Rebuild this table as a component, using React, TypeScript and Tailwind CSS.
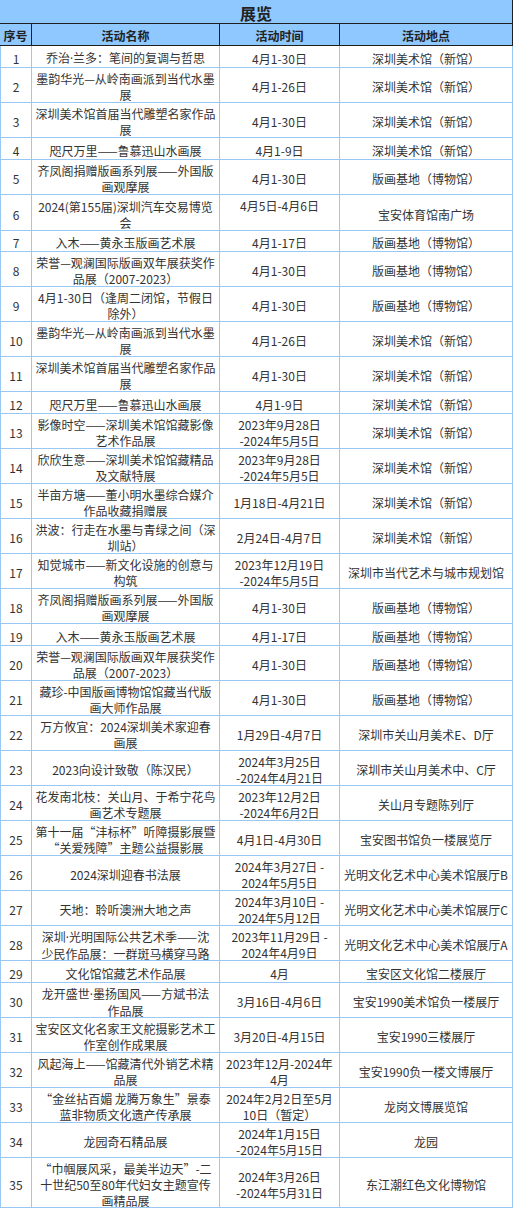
import React from "react";

type Row = {
  no: number;
  name: string[];
  time: string[];
  loc: string;
  h: string;
  timeTop?: boolean;
};

const rows: Row[] = [
  { no: 1, name: ["乔治·兰多：笔间的复调与哲思"], time: ["4月1-30日"], loc: "深圳美术馆（新馆）", h: "h-[22px]" },
  { no: 2, name: ["墨韵华光—从岭南画派到当代水墨", "展"], time: ["4月1-26日"], loc: "深圳美术馆（新馆）", h: "h-[35px]" },
  { no: 3, name: ["深圳美术馆首届当代雕塑名家作品", "展"], time: ["4月1-30日"], loc: "深圳美术馆（新馆）", h: "h-[35px]" },
  { no: 4, name: ["咫尺万里——鲁慕迅山水画展"], time: ["4月1-9日"], loc: "深圳美术馆（新馆）", h: "h-[22px]" },
  { no: 5, name: ["齐凤阁捐赠版画系列展——外国版", "画观摩展"], time: ["4月1-30日"], loc: "版画基地（博物馆）", h: "h-[35px]" },
  { no: 6, name: ["2024(第155届)深圳汽车交易博览", "会"], time: ["4月5日-4月6日"], loc: "宝安体育馆南广场", h: "h-[36px]", timeTop: true },
  { no: 7, name: ["入木——黄永玉版画艺术展"], time: ["4月1-17日"], loc: "版画基地（博物馆）", h: "h-[21px]" },
  { no: 8, name: ["荣誉—观澜国际版画双年展获奖作", "品展（2007-2023）"], time: ["4月1-30日"], loc: "版画基地（博物馆）", h: "h-[35px]" },
  { no: 9, name: ["4月1-30日（逢周二闭馆，节假日", "除外）"], time: ["4月1-30日"], loc: "版画基地（博物馆）", h: "h-[35px]" },
  { no: 10, name: ["墨韵华光—从岭南画派到当代水墨", "展"], time: ["4月1-26日"], loc: "深圳美术馆（新馆）", h: "h-[35px]" },
  { no: 11, name: ["深圳美术馆首届当代雕塑名家作品", "展"], time: ["4月1-30日"], loc: "深圳美术馆（新馆）", h: "h-[35px]" },
  { no: 12, name: ["咫尺万里——鲁慕迅山水画展"], time: ["4月1-9日"], loc: "深圳美术馆（新馆）", h: "h-[22px]" },
  { no: 13, name: ["影像时空——深圳美术馆馆藏影像", "艺术作品展"], time: ["2023年9月28日", "-2024年5月5日"], loc: "深圳美术馆（新馆）", h: "h-[35px]" },
  { no: 14, name: ["欣欣生意——深圳美术馆馆藏精品", "及文献特展"], time: ["2023年9月28日", "-2024年5月5日"], loc: "深圳美术馆（新馆）", h: "h-[35px]" },
  { no: 15, name: ["半亩方塘——董小明水墨综合媒介", "作品收藏捐赠展"], time: ["1月18日-4月21日"], loc: "深圳美术馆（新馆）", h: "h-[35px]" },
  { no: 16, name: ["洪波：行走在水墨与青绿之间（深", "圳站）"], time: ["2月24日-4月7日"], loc: "深圳美术馆（新馆）", h: "h-[35px]" },
  { no: 17, name: ["知觉城市——新文化设施的创意与", "构筑"], time: ["2023年12月19日", "-2024年5月5日"], loc: "深圳市当代艺术与城市规划馆", h: "h-[35px]" },
  { no: 18, name: ["齐凤阁捐赠版画系列展——外国版", "画观摩展"], time: ["4月1-30日"], loc: "版画基地（博物馆）", h: "h-[35px]" },
  { no: 19, name: ["入木——黄永玉版画艺术展"], time: ["4月1-17日"], loc: "版画基地（博物馆）", h: "h-[22px]" },
  { no: 20, name: ["荣誉—观澜国际版画双年展获奖作", "品展（2007-2023）"], time: ["4月1-30日"], loc: "版画基地（博物馆）", h: "h-[35px]" },
  { no: 21, name: ["藏珍-中国版画博物馆馆藏当代版", "画大师作品展"], time: ["4月1-30日"], loc: "版画基地（博物馆）", h: "h-[35px]" },
  { no: 22, name: ["万方攸宜：2024深圳美术家迎春", "画展"], time: ["1月29日-4月7日"], loc: "深圳市关山月美术E、D厅", h: "h-[35px]" },
  { no: 23, name: ["2023向设计致敬（陈汉民）"], time: ["2024年3月25日", "-2024年4月21日"], loc: "深圳市关山月美术中、C厅", h: "h-[35px]" },
  { no: 24, name: ["花发南北枝：关山月、于希宁花鸟", "画艺术专题展"], time: ["2023年12月2日", "-2024年6月2日"], loc: "关山月专题陈列厅", h: "h-[35px]" },
  { no: 25, name: ["第十一届“沣标杯”听障摄影展暨", "“关爱残障”主题公益摄影展"], time: ["4月1日-4月30日"], loc: "宝安图书馆负一楼展览厅", h: "h-[35px]" },
  { no: 26, name: ["2024深圳迎春书法展"], time: ["2024年3月27日 -", "2024年5月5日"], loc: "光明文化艺术中心美术馆展厅B", h: "h-[35px]" },
  { no: 27, name: ["天地：聆听澳洲大地之声"], time: ["2024年3月10日 -", "2024年5月12日"], loc: "光明文化艺术中心美术馆展厅C", h: "h-[35px]" },
  { no: 28, name: ["深圳·光明国际公共艺术季——沈", "少民作品展：一群斑马横穿马路"], time: ["2023年11月29日 -", "2024年4月9日"], loc: "光明文化艺术中心美术馆展厅A", h: "h-[35px]" },
  { no: 29, name: ["文化馆馆藏艺术作品展"], time: ["4月"], loc: "宝安区文化馆二楼展厅", h: "h-[22px]" },
  { no: 30, name: ["龙开盛世·墨扬国风——方斌书法", "作品展"], time: ["3月16日-4月6日"], loc: "宝安1990美术馆负一楼展厅", h: "h-[35px]" },
  { no: 31, name: ["宝安区文化名家王文舵摄影艺术工", "作室创作成果展"], time: ["3月20日-4月15日"], loc: "宝安1990三楼展厅", h: "h-[35px]" },
  { no: 32, name: ["风起海上——馆藏清代外销艺术精", "品展"], time: ["2023年12月-2024年", "4月"], loc: "宝安1990负一楼文博展厅", h: "h-[35px]" },
  { no: 33, name: ["“金丝拈百媚 龙腾万象生”景泰", "蓝非物质文化遗产传承展"], time: ["2024年2月2日至5月", "10日（暂定）"], loc: "龙岗文博展览馆", h: "h-[35px]" },
  { no: 34, name: ["龙园奇石精品展"], time: ["2024年1月15日", "-2024年5月15日"], loc: "龙园", h: "h-[35px]" },
  { no: 35, name: ["“巾帼展风采，最美半边天”-二", "十世纪50至80年代妇女主题宣传", "画精品展"], time: ["2024年3月26日", "-2024年5月31日"], loc: "东江潮红色文化博物馆", h: "h-[50px]" },
];

function Line({ text }: { text: string }) {
  const parts = text.split("·");
  return (
    <div className="whitespace-nowrap leading-[16px]">
      {parts.map((p, i) => (
        <React.Fragment key={i}>
          {i > 0 && <span className="font-['Open_Sans',sans-serif]">·</span>}
          {p}
        </React.Fragment>
      ))}
    </div>
  );
}

function Lines({ lines }: { lines: string[] }) {
  return (
    <>
      {lines.map((l, i) => (
        <Line key={i} text={l} />
      ))}
    </>
  );
}

const cell =
  "flex flex-col items-center justify-center pt-[4px] border-r border-b border-[#99c8f2] text-center overflow-hidden";

export default function App() {
  return (
    <div className="w-[513px] bg-white font-['Noto_Sans_CJK_SC',sans-serif] text-[12px] text-[#333333]">
      <div className="flex h-[24px] items-center justify-center border-b border-r border-[#1f1f1f] bg-[#8ec8ff] pt-[2px] text-[16px] font-bold leading-[18px] text-[#222222]">
        展览
      </div>
      <div className="grid h-[22px] grid-cols-[32px_188px_120px_173px] bg-[#8ec8ff] font-bold text-[#222222]">
        {["序号", "活动名称", "活动时间", "活动地点"].map((t) => (
          <div
            key={t}
            className="flex items-center justify-center border-b border-r border-[#1f1f1f] pt-[2px] leading-[16px]"
          >
            {t}
          </div>
        ))}
      </div>
      {rows.map((r) => (
        <div key={r.no} className={`grid grid-cols-[32px_188px_120px_173px] ${r.h}`}>
          <div className={`${cell} border-l`}>
            <div className="leading-[16px]">{r.no}</div>
          </div>
          <div className={cell}>
            <Lines lines={r.name} />
          </div>
          {r.timeTop ? (
            <div className="flex flex-col items-center justify-start overflow-hidden border-b border-r border-[#99c8f2] pt-[3px] text-center">
              <Lines lines={r.time} />
            </div>
          ) : (
            <div className={cell}>
              <Lines lines={r.time} />
            </div>
          )}
          <div className={cell}>
            <Line text={r.loc} />
          </div>
        </div>
      ))}
    </div>
  );
}
